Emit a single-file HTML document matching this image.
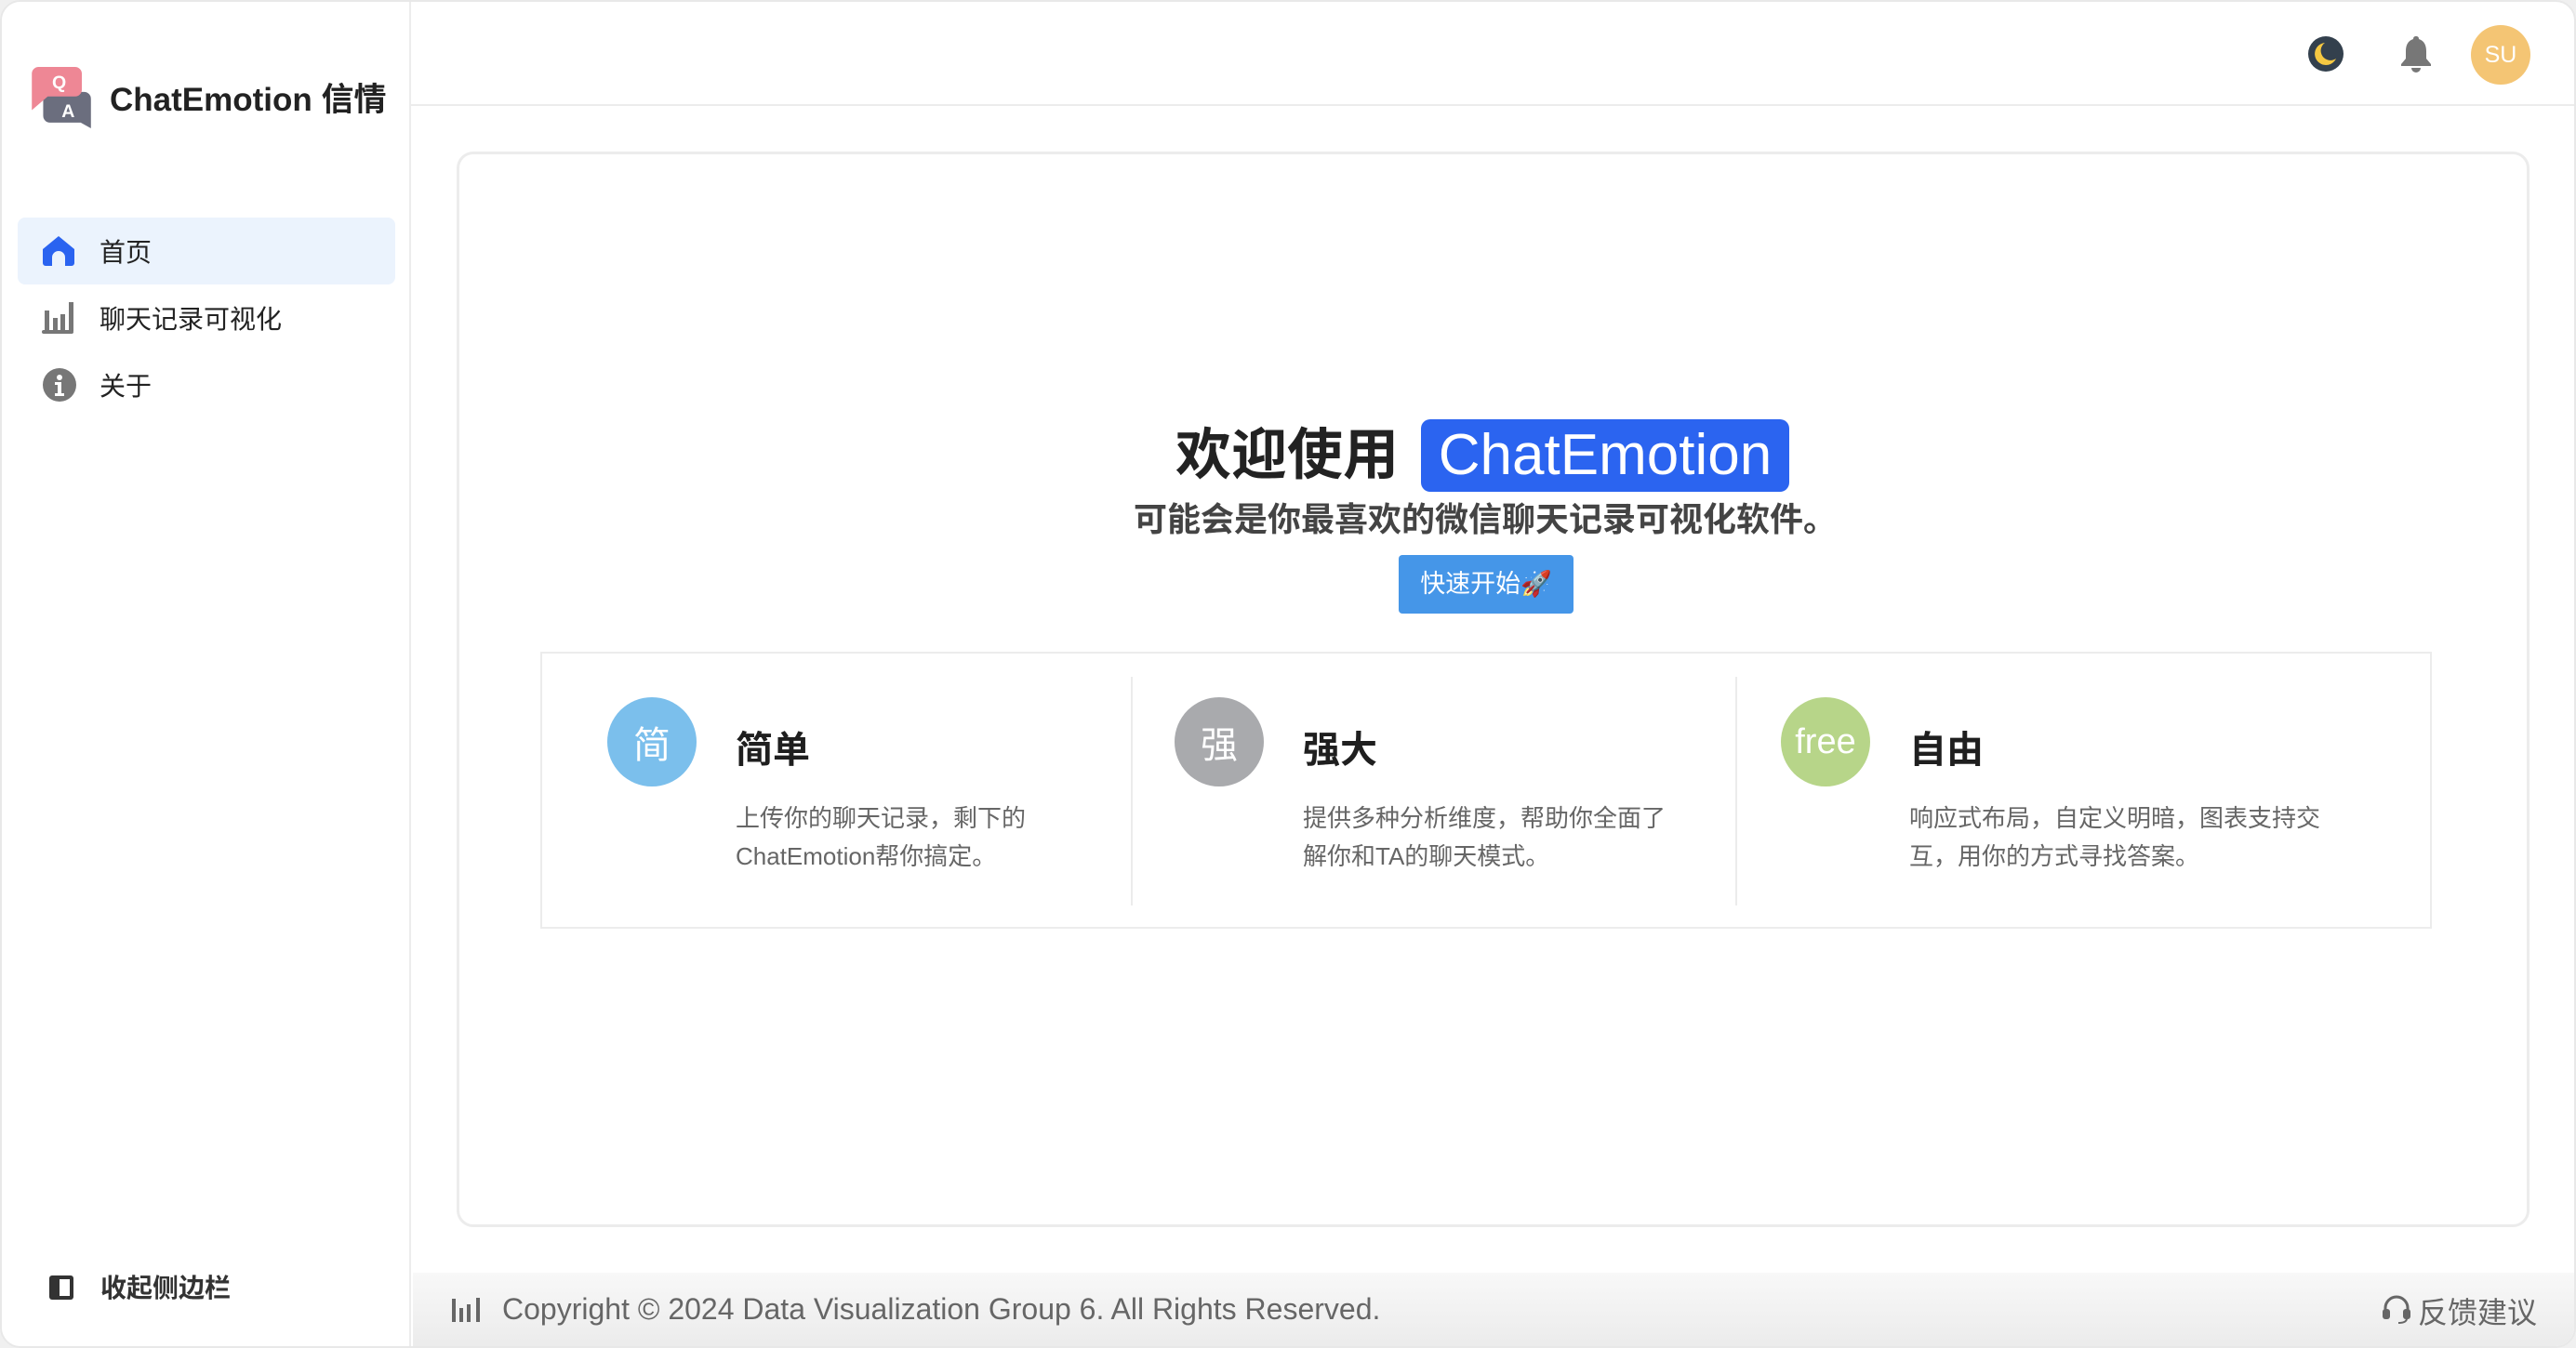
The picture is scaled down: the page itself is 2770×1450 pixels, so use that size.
<!DOCTYPE html>
<html><head><meta charset="utf-8"><style>
*{margin:0;padding:0;box-sizing:border-box}
body{width:2770px;height:1450px;background:#f0f0f0;font-family:"Liberation Sans","Noto Sans CJK SC",sans-serif;position:relative;overflow:hidden}
.win{position:absolute;left:0;top:0;width:2770px;height:1450px;background:#fff;border-radius:22px;overflow:hidden;border:2px solid #e8e8e8}
.abs{position:absolute}
.side{left:0;top:0;width:440px;height:1446px;border-right:2px solid #ececec;background:#fff}
.menu{left:17px;width:406px;height:72px;border-radius:8px;display:flex;align-items:center;font-size:28px;color:#222}
.menu svg{position:absolute;left:26px}
.menu span{position:absolute;left:88px}
.circ{width:96px;height:96px;border-radius:50%;color:#fff;font-size:40px;display:flex;align-items:center;justify-content:center}
.ft{font-size:40px;font-weight:bold;color:#1f1f1f}
.fd{font-size:26px;line-height:41px;color:#666;width:410px}
</style></head><body>
<div class="win">
<div class="abs side">
  <svg class="abs" style="left:32px;top:70px" width="64" height="66" viewBox="0 0 52 54">
    <path d="M16 22 h30 a6 6 0 0 1 6 6 v26 l-9 -5 h-27 a6 6 0 0 1 -6 -6 v-15 a6 6 0 0 1 6 -6z" fill="#6b6e7e"/>
    <path d="M6 0 h32 a6 6 0 0 1 6 6 v14 a6 6 0 0 1 -6 6 h-24 l-14 12 v-32 a6 6 0 0 1 6 -6z" fill="#ee8795"/>
    <text x="24" y="19" fill="#fff" font-size="16" font-weight="bold" text-anchor="middle" font-family="Liberation Sans">Q</text>
    <text x="32" y="44" fill="#fff" font-size="16" font-weight="bold" text-anchor="middle" font-family="Liberation Sans">A</text>
  </svg>
  <div class="abs" style="left:116px;top:77px;font-size:35px;font-weight:bold;color:#222">ChatEmotion 信情</div>
  <div class="abs menu" style="top:232px;background:#ebf3fd">
    <svg width="36" height="34" viewBox="0 0 36 34"><path d="M18 1 L35 15 V30 a3 3 0 0 1 -3 3 H25 V24 a7 7 0 0 0 -14 0 V33 H4 a3 3 0 0 1 -3 -3 V15z" fill="#2a63f0"/></svg>
    <span>首页</span></div>
  <div class="abs menu" style="top:304px">
    <svg width="36" height="36" viewBox="0 0 36 36"><g fill="#777"><rect x="3" y="10" width="5" height="22"/><rect x="12" y="18" width="5" height="14"/><rect x="20" y="14" width="5" height="18"/><rect x="29" y="1" width="5" height="31"/><rect x="0" y="31" width="34" height="4" rx="2"/></g></svg>
    <span>聊天记录可视化</span></div>
  <div class="abs menu" style="top:376px">
    <svg width="38" height="38" viewBox="0 0 38 38"><circle cx="19" cy="19" r="18" fill="#777"/><circle cx="19" cy="11" r="3" fill="#fff"/><path d="M14 16 h7 v12 h3 v3 h-10 v-3 h3 v-9 h-3z" fill="#fff"/></svg>
    <span>关于</span></div>
  <svg class="abs" style="left:50px;top:1369px" width="28" height="28" viewBox="0 0 28 28"><rect x="1" y="1" width="26" height="26" rx="3" fill="#333"/><rect x="12" y="5" width="11" height="18" fill="#fff"/></svg>
  <div class="abs" style="left:106px;top:1362px;font-size:28px;font-weight:bold;color:#333">收起侧边栏</div>
</div>
<div class="abs" style="left:440px;top:110px;width:2330px;height:2px;background:#ececec"></div>
<svg class="abs" style="left:2479px;top:36px" width="40" height="40" viewBox="0 0 40 40"><circle cx="20" cy="20" r="19" fill="#33404d"/><path d="M19 8 a12 12 0 1 0 12 17 a10 10 0 0 1 -12 -17z" fill="#f5c842"/></svg>
<svg class="abs" style="left:2579px;top:36px" width="34" height="40" viewBox="0 0 34 40"><path d="M17 1 c2 0 3 1 3 3 c6 2 8 7 8 13 v8 l5 6 v2 h-32 v-2 l5 -6 v-8 c0 -6 2 -11 8 -13 c0 -2 1 -3 3 -3z" fill="#777"/><path d="M12 35 h10 a5 5 0 0 1 -10 0z" fill="#777"/></svg>
<div class="abs" style="left:2655px;top:25px;width:64px;height:64px;border-radius:50%;background:#f4c574;color:#fff;font-size:25px;display:flex;align-items:center;justify-content:center">SU</div>

<div class="abs" style="left:489px;top:161px;width:2229px;height:1157px;border:3px solid #ececec;border-radius:18px"></div>
<div class="abs" style="left:1262px;top:450px;font-size:60px;font-weight:bold;color:#222;line-height:76px">欢迎使用</div>
<div class="abs" style="left:1526px;top:449px;width:396px;height:78px;background:#2b64f0;border-radius:10px;color:#fff;font-size:62px;line-height:78px;text-align:center">ChatEmotion</div>
<div class="abs" style="left:1100px;top:528px;width:990px;text-align:center;font-size:36px;font-weight:bold;color:#444">可能会是你最喜欢的微信聊天记录可视化软件。</div>
<div class="abs" style="left:1502px;top:595px;width:188px;height:63px;background:#4596e8;border-radius:4px;color:#fff;font-size:27px;line-height:63px;text-align:center">快速开始🚀</div>

<div class="abs" style="left:579px;top:699px;width:2034px;height:298px;border:2px solid #ececec"></div>
<div class="abs" style="left:1214px;top:726px;width:2px;height:246px;background:#ececec"></div>
<div class="abs" style="left:1864px;top:726px;width:2px;height:246px;background:#ececec"></div>

<div class="abs circ" style="left:651px;top:748px;background:#7bbfec">简</div>
<div class="abs ft" style="left:789px;top:772px">简单</div>
<div class="abs fd" style="left:789px;top:858px">上传你的聊天记录，剩下的ChatEmotion帮你搞定。</div>

<div class="abs circ" style="left:1261px;top:748px;background:#a9aaad">强</div>
<div class="abs ft" style="left:1399px;top:772px">强大</div>
<div class="abs fd" style="left:1399px;top:858px;width:390px">提供多种分析维度，帮助你全面了解你和TA的聊天模式。</div>

<div class="abs circ" style="left:1913px;top:748px;background:#b7d589;font-size:38px">free</div>
<div class="abs ft" style="left:2051px;top:772px">自由</div>
<div class="abs fd" style="left:2051px;top:858px;width:480px">响应式布局，自定义明暗，图表支持交互，用你的方式寻找答案。</div>

<div class="abs" style="left:442px;top:1367px;width:2326px;height:82px;background:linear-gradient(#f8f8f8,#ebebeb)"></div>
<svg class="abs" style="left:484px;top:1393px" width="34" height="28" viewBox="0 0 34 28"><g fill="#666"><rect x="0" y="2" width="4" height="25"/><rect x="8" y="12" width="4" height="15"/><rect x="16" y="8" width="4" height="19"/><rect x="26" y="1" width="4" height="26"/></g></svg>
<div class="abs" style="left:538px;top:1388px;font-size:32px;color:#666">Copyright © 2024 Data Visualization Group 6. All Rights Reserved.</div>
<svg class="abs" style="left:2559px;top:1391px" width="32" height="32" viewBox="0 0 32 32"><path d="M4 18 v-4 a12 12 0 0 1 24 0 v4" fill="none" stroke="#666" stroke-width="3"/><rect x="1" y="15" width="8" height="11" rx="3" fill="#666"/><rect x="23" y="15" width="8" height="11" rx="3" fill="#666"/><path d="M27 25 q0 5 -9 5" fill="none" stroke="#666" stroke-width="2"/></svg>
<div class="abs" style="left:2598px;top:1385px;font-size:32px;color:#666">反馈建议</div>
</div>
</body></html>
